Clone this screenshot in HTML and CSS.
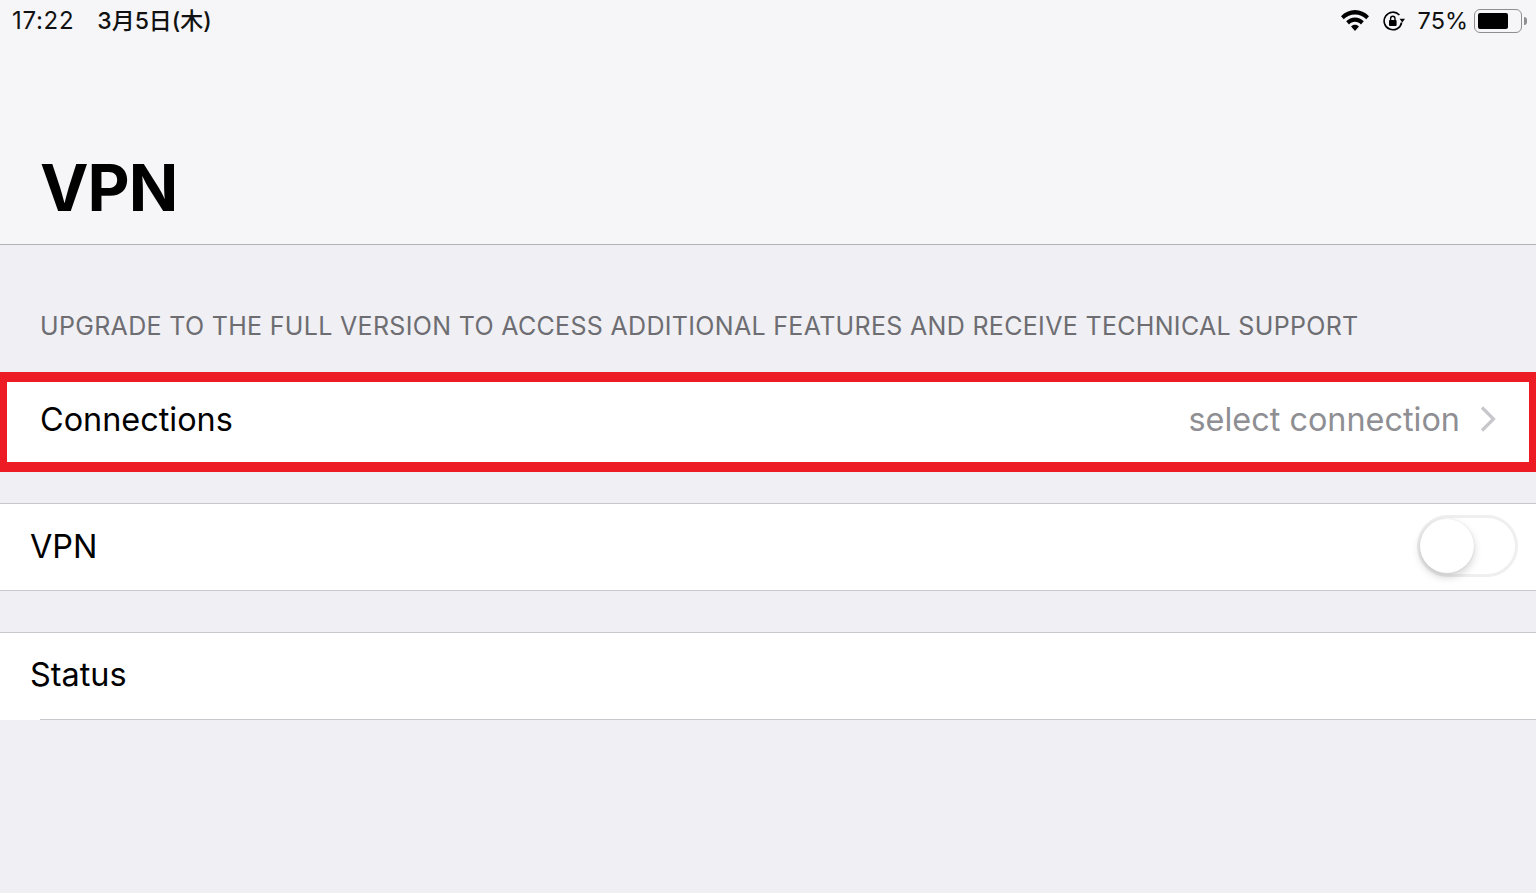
FILE: index.html
```html
<!DOCTYPE html>
<html lang="en">
<head>
  <meta charset="UTF-8">
  <meta name="viewport" content="width=device-width, initial-scale=1.0">
  <title>VPN</title>
  <link rel="stylesheet" href="styles.css">
</head>
<body>
  <header class="top">
    <div class="status-bar">
      <div class="status-left">
        <span class="time">17:22</span>
        <span class="date">3月5日(木)</span>
      </div>
      <div class="status-right">
        <svg class="wifi" width="28" height="21" viewBox="1.6 3 24.8 16.3" preserveAspectRatio="none">
          <path d="M14 3C9.2 3 4.9 4.8 1.6 7.8L4 10.2C6.7 7.8 10.2 6.4 14 6.4s7.3 1.4 10 3.8l2.4-2.4C23.1 4.8 18.8 3 14 3z" fill="#000"/>
          <path d="M14 8.8c-3 0-5.7 1.1-7.8 3l2.5 2.4c1.4-1.2 3.3-2 5.3-2s3.9.8 5.3 2l2.5-2.4c-2.1-1.9-4.8-3-7.8-3z" fill="#000"/>
          <path d="M14 14.5c-1.4 0-2.6.5-3.5 1.3L14 19.3l3.5-3.5c-.9-.8-2.1-1.3-3.5-1.3z" fill="#000"/>
        </svg>
        <svg class="lock" width="24" height="20" viewBox="0 0 24 20">
          <path d="M19.6 11.5A8.8 8.8 0 1 1 17.4 4" fill="none" stroke="#000" stroke-width="1.6"/>
          <path d="M17.6 7.8L23 7.8L20.3 11.6z" fill="#000"/>
          <rect x="7" y="9" width="7.6" height="6" rx="1" fill="#000"/>
          <path d="M8.6 9V7.4a2.2 2.2 0 0 1 4.4 0V9" fill="none" stroke="#000" stroke-width="1.4"/>
        </svg>
        <span class="battery-pct">75%</span>
        <div class="battery">
          <div class="battery-body"><div class="battery-fill"></div></div>
          <div class="battery-tip"></div>
        </div>
      </div>
    </div>
    <h1>VPN</h1>
  </header>

  <main>
    <p class="section-note">UPGRADE TO THE FULL VERSION TO ACCESS ADDITIONAL FEATURES AND RECEIVE TECHNICAL SUPPORT</p>

    <div class="connections">
      <span class="row-label">Connections</span>
      <span class="row-value">select connection</span>
      <svg class="chevron" width="16" height="26" viewBox="0 0 16 26">
        <path d="M2 1.5L13.5 13L2 24.5" fill="none" stroke="#c7c7cc" stroke-width="3.2"/>
      </svg>
    </div>

    <div class="row row-vpn">
      <span class="row-label">VPN</span>
      <div class="switch"><div class="knob"></div></div>
    </div>

    <div class="row row-status">
      <span class="row-label">Status</span>
    </div>
  </main>
</body>
</html>
```

FILE: styles.css
```css
* {
  box-sizing: border-box;
}

body {
  margin: 0;
  height: 893px;
  overflow: hidden;
  background-color: #efeff4;
  font-family: Inter, "Noto Sans CJK JP", sans-serif;
  color: #000;
}

.top {
  height: 245px;
  background-color: #f6f6f9;
  border-bottom: 1px solid #b2b2b2;
}

.status-bar {
  display: flex;
  justify-content: space-between;
  align-items: center;
  height: 41px;
  padding: 0 9px 0 12px;
  color: #111;
}

.status-left {
  display: flex;
  align-items: center;
  gap: 23px;
  line-height: 28px;
}

.time {
  font-size: 24px;
  letter-spacing: 0.7px;
}

.date {
  font-size: 23px;
  font-weight: 500;
}

.status-right {
  display: flex;
  align-items: center;
}

.wifi {
  margin-right: 13px;
}

.lock {
  margin-right: 12px;
}

.battery-pct {
  margin-right: 6px;
  font-size: 23.5px;
}

.battery {
  display: flex;
  align-items: center;
}

.battery-body {
  width: 48px;
  height: 24px;
  padding: 3px;
  border: 1.5px solid #8f8f8f;
  border-radius: 6px;
}

.battery-fill {
  width: 30px;
  height: 100%;
  background-color: #000;
  border-radius: 2px;
}

.battery-tip {
  width: 3px;
  height: 8px;
  margin-left: 2px;
  background-color: #8f8f8f;
  border-radius: 0 3px 3px 0;
}

h1 {
  margin: 0;
  padding: 108px 0 0 40px;
  height: 203px;
  font-size: 65px;
  font-weight: 700;
  line-height: 78px;
  letter-spacing: -1px;
}

.section-note {
  margin: 0;
  height: 127px;
  padding: 66px 0 0 40px;
  font-size: 25px;
  line-height: 30px;
  letter-spacing: 0.32px;
  color: #6d6d72;
  white-space: nowrap;
}

.connections {
  display: flex;
  align-items: center;
  height: 100px;
  padding: 0 33px 6px 33px;
  background-color: #fff;
  border-style: solid;
  border-color: #ed1c24;
  border-width: 10px 7px;
}

.row-label {
  font-size: 32.4px;
}

.row-value {
  margin-left: auto;
  margin-right: 20px;
  font-size: 32.4px;
  color: #8e8e93;
}

.row {
  display: flex;
  align-items: center;
  height: 88px;
  padding-left: 30px;
  background-color: #fff;
  border-top: 1px solid #c8c7cc;
  border-bottom: 1px solid #c8c7cc;
}

.row-vpn {
  margin-top: 31px;
  padding-right: 18px;
  padding-bottom: 2px;
  justify-content: space-between;
}

.row-status {
  margin-top: 41px;
  padding-bottom: 4px;
  border-bottom: none;
  position: relative;
}

/* separator is inset from the left edge */
.row-status::after {
  content: "";
  position: absolute;
  left: 40px;
  right: 0;
  bottom: 0;
  height: 1px;
  background-color: #c8c7cc;
}

.switch {
  width: 101px;
  height: 62px;
  padding: 1px 0;
  background-color: #fff;
  border: 3px solid #efefef;
  border-radius: 31px;
}

.knob {
  width: 54px;
  height: 54px;
  background-color: #fff;
  border-radius: 50%;
  box-shadow: 0 4px 8px rgba(0, 0, 0, 0.18), 0 0 2px rgba(0, 0, 0, 0.1);
}
```
